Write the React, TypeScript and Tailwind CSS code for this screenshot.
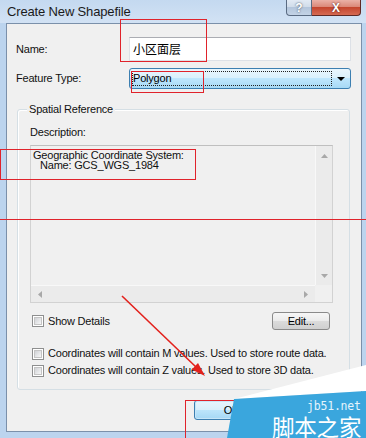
import React from "react";

function Check() {
  return (
    <span className="flex-none w-[12px] h-[12px] border border-[#8e8f8f] bg-white p-[1px]">
      <span className="block w-full h-full border border-[#c4c4c4] bg-[linear-gradient(135deg,#d0d2d6_0%,#f7f7f7_100%)]" />
    </span>
  );
}

function Tri({ dir }: { dir: "up" | "down" | "left" | "right" }) {
  const pts =
    dir === "up"
      ? "0,4 3.5,0 7,4"
      : dir === "down"
      ? "0,0 7,0 3.5,4"
      : dir === "left"
      ? "4,0 4,7 0,3.5"
      : "0,0 0,7 4,3.5";
  const w = dir === "up" || dir === "down" ? 7 : 4;
  const h = dir === "up" || dir === "down" ? 4 : 7;
  return (
    <svg width={w} height={h} viewBox={`0 0 ${w} ${h}`} className="block">
      <polygon points={pts} fill="#a8a8a8" />
    </svg>
  );
}

export default function App() {
  return (
    <div className="relative w-[366px] h-[438px] overflow-hidden bg-[#bcd4ee] flex flex-col font-['Liberation_Sans',Arial,sans-serif] text-[11px] tracking-[-0.2px] text-[#111111]">
      {/* Title bar */}
      <div className="h-[23px] flex-none flex items-start justify-between pl-[7px] pr-[5px] bg-[linear-gradient(to_bottom,#c4d9f0_0%,#d2e2f4_100%)]">
        <div className="h-[23px] flex items-center text-[13px] tracking-[-0.15px] text-[#1a1a1a]">
          Create New Shapefile
        </div>
        <div className="flex">
          <div className="w-[26px] h-[16px] flex items-center justify-center border border-[#5a6b82] border-t-0 rounded-bl-[4px] bg-[linear-gradient(to_bottom,#e2eaf4_0%,#cfdbe9_50%,#b4c6dc_50%,#c3d3e6_100%)] text-[12px] font-bold text-white tracking-normal [text-shadow:0_0_2px_#2d3a4c]">
            ?
          </div>
          <div className="w-[49px] h-[16px] flex items-center justify-center border border-[#5e2a26] border-t-0 border-l-0 rounded-br-[4px] bg-[linear-gradient(to_bottom,#eab1a7_0%,#d98474_50%,#c4462f_50%,#d66a52_100%)] text-[12px] font-bold text-white tracking-normal [text-shadow:0_0_2px_#4a1410]">
            X
          </div>
        </div>
      </div>

      {/* Client area */}
      <div className="flex-1 ml-[6px] mr-[4px] mb-[6px] border border-[#7b90aa] bg-[#f0f0f0] flex flex-col pt-[13px] pl-[9px] pr-[9px]">
        {/* Name */}
        <div className="flex items-center h-[24px]">
          <div className="w-[113px]">Name:</div>
          <div className="w-[222px] h-[24px] border border-[#dde1e7] border-t-[#abadb3] bg-white flex items-center pl-[3px] font-['Noto_Sans_CJK_SC',sans-serif] text-[12px] tracking-normal text-black">
            小区面层
          </div>
        </div>
        {/* Feature type */}
        <div className="flex items-center h-[21px] mt-[7px]">
          <div className="w-[113px]">Feature Type:</div>
          <div className="w-[222px] h-[21px] border border-[#3c7fb1] rounded-[3px] bg-[linear-gradient(to_bottom,#eaf6fd_0%,#d9f0fc_50%,#bee6fd_50%,#a7d9f5_100%)] flex items-stretch p-[2px]">
            <div className="w-[200px] border border-dotted border-[#222] flex items-center text-black">
              Polygon
            </div>
            <div className="flex-1 flex items-center justify-center pl-[1px]">
              <svg width="8" height="4" viewBox="0 0 8 4" className="block">
                <polygon points="0,0 8,0 4,4" fill="#000" />
              </svg>
            </div>
          </div>
        </div>

        {/* Spatial Reference group */}
        <div className="relative mt-[20px] ml-[1px] w-[333px] h-[281px] flex-none border border-[#d5dfe5] rounded-[3px] shadow-[inset_1px_1px_0_#ffffff] flex flex-col pt-[16px] pl-[12px] pr-[16px]">
          <div className="absolute -top-[7px] left-[9px] px-[2px] h-[13px] leading-[13px] bg-[#f0f0f0]">
            Spatial Reference
          </div>
          <div className="h-[13px] leading-[13px]">Description:</div>
          <div className="mt-[6px] w-[303px] h-[158px] flex-none border border-[#d2d2d2] border-t-[#bfbfbf] bg-[#f0f0f0] flex flex-col">
            <div className="flex flex-1 min-h-0">
              <div className="flex-1 pt-[4px] pl-[2px] leading-[10px] text-[#111]">
                <div>Geographic Coordinate System:</div>
                <div className="pl-[7px]">Name: GCS_WGS_1984</div>
              </div>
              <div className="w-[17px] bg-[#ebebeb] border-l border-[#f8f8f8] flex flex-col items-center justify-between pt-[8px] pb-[7px]">
                <Tri dir="up" />
                <Tri dir="down" />
              </div>
            </div>
            <div className="h-[17px] flex flex-none">
              <div className="flex-1 bg-[#ebebeb] border-t border-[#f8f8f8] flex items-center justify-between pl-[7px] pr-[7px]">
                <Tri dir="left" />
                <Tri dir="right" />
              </div>
              <div className="w-[17px] bg-[#f0f0f0]" />
            </div>
          </div>

          {/* Show details row */}
          <div className="mt-[9px] h-[18px] flex items-center justify-between">
            <div className="flex items-center gap-[4px] ml-[2px]">
              <Check />
              <span>Show Details</span>
            </div>
            <div className="mr-[3px] w-[58px] h-[18px] border border-[#8a8a8a] rounded-[3px] bg-[linear-gradient(to_bottom,#f6f6f6_0%,#ebebeb_50%,#dcdcdc_50%,#d0d0d0_100%)] flex items-center justify-center text-black">
              Edit...
            </div>
          </div>

          <div className="mt-[17px] h-[13px] flex items-center gap-[4px] ml-[2px]">
            <Check />
            <span>Coordinates will contain M values. Used to store route data.</span>
          </div>
          <div className="mt-[4px] h-[13px] flex items-center gap-[4px] ml-[2px]">
            <Check />
            <span>Coordinates will contain Z values. Used to store 3D data.</span>
          </div>
        </div>

        {/* OK / Cancel */}
        <div className="mt-[10px] h-[20px] flex justify-end gap-[7px] mr-[1px]">
          <div className="w-[75px] h-[20px] border border-[#3c7fb1] rounded-[3px] bg-[linear-gradient(to_bottom,#e8f5fc_0%,#d8effb_50%,#bde5fb_50%,#a5d8f5_100%)] shadow-[inset_0_0_0_1px_#c6e6f8] flex items-center justify-center text-black">
            OK
          </div>
          <div className="w-[75px] h-[20px] border border-[#707070] rounded-[3px] bg-[linear-gradient(to_bottom,#f2f2f2_0%,#ebebeb_50%,#dddddd_50%,#cfcfcf_100%)] flex items-center justify-center text-black">
            Cancel
          </div>
        </div>
      </div>

      {/* Red annotations (overlay) */}
      <div className="absolute left-[120px] top-[19px] w-[87px] h-[43px] border border-[#e0232b] pointer-events-none" />
      <div className="absolute left-[131px] top-[71px] w-[73px] h-[22px] border border-[#e0232b] pointer-events-none" />
      <div className="absolute left-[0px] top-[149px] w-[196px] h-[31px] border border-[#e0232b] pointer-events-none" />
      <div className="absolute left-0 top-[219px] w-[366px] h-[1px] bg-[#e0232b] pointer-events-none" />
      <div className="absolute left-[185px] top-[400px] w-[90px] h-[60px] border border-[#e0232b] pointer-events-none" />

      <svg className="absolute inset-0 pointer-events-none" width="366" height="438" viewBox="0 0 366 438">
        {/* arrow */}
        <line x1="122" y1="296" x2="196" y2="367" stroke="#e3211c" strokeWidth="1.6" />
        <polygon points="205,376 191.8,369.5 198,363.1" fill="#e3211c" />
        {/* watermark */}
        <polygon points="234,399 366,365 366,391" fill="#ffffff" />
        <polygon points="234,399 366,391 366,438 227,438" fill="#3aa6dd" />
        <text x="307" y="410" fontFamily="'DejaVu Sans Mono', monospace" fontSize="11.5" fill="#e4f4fc">
          jb51.net
        </text>
        <text x="272" y="436" fontFamily="'Noto Sans CJK SC', sans-serif" fontSize="22.5" fill="#ffffff">
          脚本之家
        </text>
      </svg>
    </div>
  );
}
